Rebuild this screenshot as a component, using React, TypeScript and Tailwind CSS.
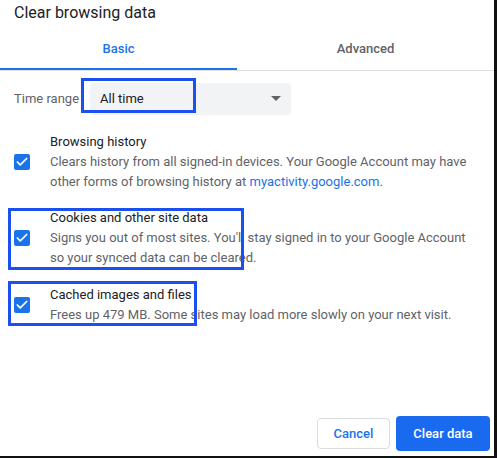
import { Check } from "lucide-react"

const font = { fontFamily: "Roboto, 'Liberation Sans', sans-serif" }

function Box() {
  return (
    <div className="w-4 h-4 rounded-[2px] bg-[#1a73e8] flex items-center justify-center">
      <Check className="w-3.5 h-3.5 text-white" strokeWidth={3} />
    </div>
  )
}

function Item({ title, children, top }: { title: string; children: React.ReactNode; top: string }) {
  return (
    <div className={`flex ${top}`}>
      <div className="w-[50px] pl-[14px] flex items-center"><Box /></div>
      <div className="flex-1 pr-6">
        <div className="text-[13px] leading-5 text-[#202124]">{title}</div>
        <div className="text-[13px] leading-5 text-[#5f6368]">{children}</div>
      </div>
    </div>
  )
}

export default function App() {
  return (
    <div style={font} className="relative w-[497px] h-[458px] bg-white border-r-[3px] border-b-[2px] border-[#111] overflow-hidden">
      <div className="pl-[14px] pt-[3px] text-[16px] leading-5 text-[#202124]">Clear browsing data</div>
      <div className="flex mt-[16px] text-[13px] border-b border-[#e0e0e0] w-[494px]">
        <div className="w-[237px] text-center text-[#1a73e8] font-medium pb-[9px] border-b-2 border-[#1a73e8]">Basic</div>
        <div className="flex-1 text-center text-[#5f6368] font-medium pb-[9px]">Advanced</div>
      </div>
      <div className="flex items-center mt-[12px] pl-[14px]">
        <span className="text-[13px] text-[#5f6368] w-[76px]">Time range</span>
        <div className="w-[201px] h-[32px] bg-[#f1f3f4] rounded flex items-center justify-between px-[10px] text-[13px] text-[#202124]">
          <span>All time</span>
          <span className="w-0 h-0 border-l-[5px] border-r-[5px] border-t-[5px] border-l-transparent border-r-transparent border-t-[#5f6368]" />
        </div>
      </div>
      <Item title="Browsing history" top="mt-[17px]">
        Clears history from all signed-in devices. Your Google Account may have other forms of browsing history at <span className="text-[#1a73e8]">myactivity.google.com</span>.
      </Item>
      <Item title="Cookies and other site data" top="mt-[16px]">
        Signs you out of most sites. You'll stay signed in to your Google Account so your synced data can be cleared.
      </Item>
      <Item title="Cached images and files" top="mt-[17px]">
        Frees up 479 MB. Some sites may load more slowly on your next visit.
      </Item>
      <div className="absolute right-[4px] bottom-[5px] flex gap-[6px] text-[13px] font-medium">
        <button className="w-[73px] h-[31px] mt-[2px] border border-[#dadce0] rounded text-[#1a73e8] bg-white">Cancel</button>
        <button className="w-[94px] h-[35px] rounded-sm bg-[#1a6af0] text-white">Clear data</button>
      </div>
      <div className="absolute left-[81px] top-[78px] w-[115px] h-[35px] border-[3px] border-[#1b4ff0]" />
      <div className="absolute left-[8px] top-[208px] w-[236px] h-[62px] border-[3px] border-[#1b4ff0]" />
      <div className="absolute left-[8px] top-[281px] w-[189px] h-[45px] border-[3px] border-[#1b4ff0]" />
    </div>
  )
}
